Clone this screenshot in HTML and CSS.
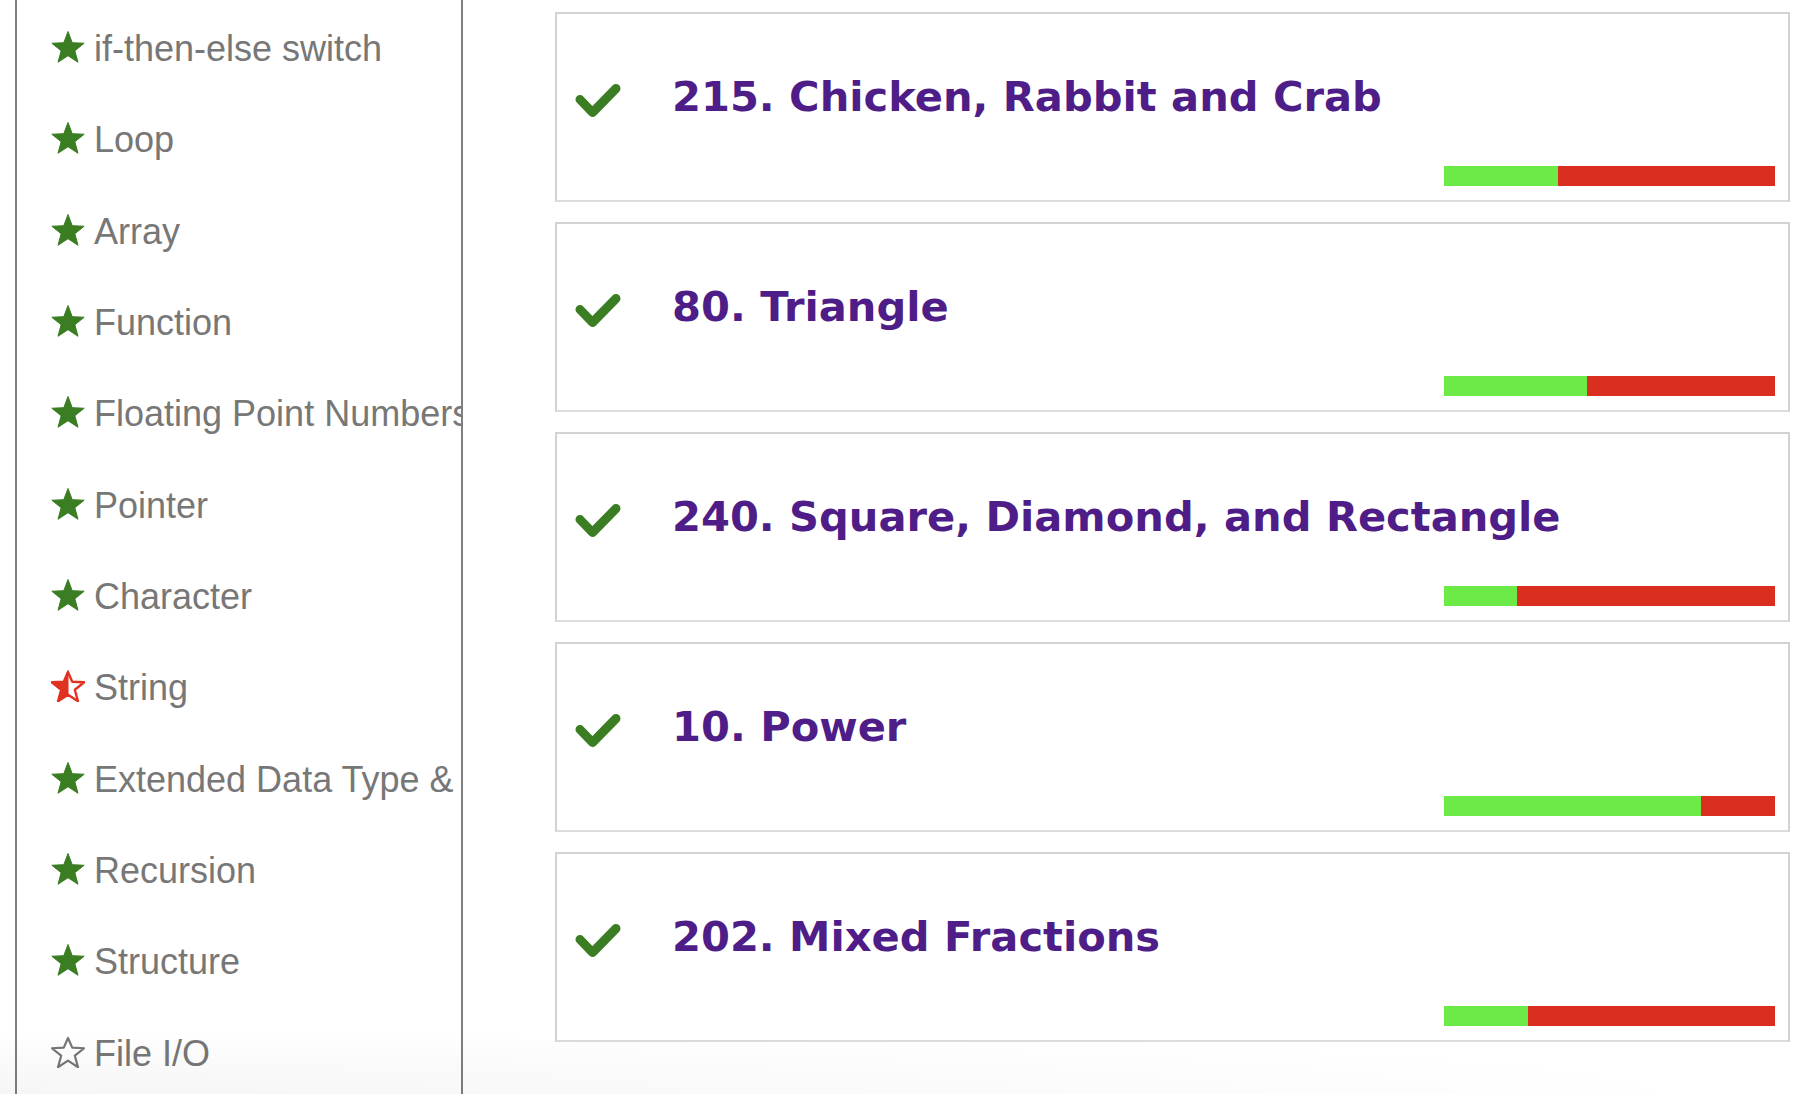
FILE: index.html
```html
<!DOCTYPE html>
<html lang="en">
<head>
<meta charset="utf-8">
<title>Problems</title>
<link rel="stylesheet" href="styles.css">
</head>
<body>
<div class="page">
  <aside class="sidebar">
    <ul class="topics">
      <li class="topic"><svg class="star" viewBox="0 0 34 32"><polygon class="full" points="17,0.5 21.23,11.68 33.17,12.25 23.85,19.72 26.99,31.25 17,24.7 7.01,31.25 10.15,19.72 0.83,12.25 12.77,11.68"/></svg><span>if-then-else switch</span></li>
      <li class="topic"><svg class="star" viewBox="0 0 34 32"><polygon class="full" points="17,0.5 21.23,11.68 33.17,12.25 23.85,19.72 26.99,31.25 17,24.7 7.01,31.25 10.15,19.72 0.83,12.25 12.77,11.68"/></svg><span>Loop</span></li>
      <li class="topic"><svg class="star" viewBox="0 0 34 32"><polygon class="full" points="17,0.5 21.23,11.68 33.17,12.25 23.85,19.72 26.99,31.25 17,24.7 7.01,31.25 10.15,19.72 0.83,12.25 12.77,11.68"/></svg><span>Array</span></li>
      <li class="topic"><svg class="star" viewBox="0 0 34 32"><polygon class="full" points="17,0.5 21.23,11.68 33.17,12.25 23.85,19.72 26.99,31.25 17,24.7 7.01,31.25 10.15,19.72 0.83,12.25 12.77,11.68"/></svg><span>Function</span></li>
      <li class="topic"><svg class="star" viewBox="0 0 34 32"><polygon class="full" points="17,0.5 21.23,11.68 33.17,12.25 23.85,19.72 26.99,31.25 17,24.7 7.01,31.25 10.15,19.72 0.83,12.25 12.77,11.68"/></svg><span>Floating Point Numbers</span></li>
      <li class="topic"><svg class="star" viewBox="0 0 34 32"><polygon class="full" points="17,0.5 21.23,11.68 33.17,12.25 23.85,19.72 26.99,31.25 17,24.7 7.01,31.25 10.15,19.72 0.83,12.25 12.77,11.68"/></svg><span>Pointer</span></li>
      <li class="topic"><svg class="star" viewBox="0 0 34 32"><polygon class="full" points="17,0.5 21.23,11.68 33.17,12.25 23.85,19.72 26.99,31.25 17,24.7 7.01,31.25 10.15,19.72 0.83,12.25 12.77,11.68"/></svg><span>Character</span></li>
      <li class="topic"><svg class="star" viewBox="0 0 34 32"><polygon class="half-outline" points="17,2 21.23,11.68 33.17,12.25 23.85,19.72 26.99,31.25 17,24.7 7.01,31.25 10.15,19.72 0.83,12.25 12.77,11.68"/><polygon class="half-fill" points="17,0.5 17,24.7 7.01,31.25 10.15,19.72 0.83,12.25 12.77,11.68"/></svg><span>String</span></li>
      <li class="topic"><svg class="star" viewBox="0 0 34 32"><polygon class="full" points="17,0.5 21.23,11.68 33.17,12.25 23.85,19.72 26.99,31.25 17,24.7 7.01,31.25 10.15,19.72 0.83,12.25 12.77,11.68"/></svg><span>Extended Data Type &amp; Bit Operations</span></li>
      <li class="topic"><svg class="star" viewBox="0 0 34 32"><polygon class="full" points="17,0.5 21.23,11.68 33.17,12.25 23.85,19.72 26.99,31.25 17,24.7 7.01,31.25 10.15,19.72 0.83,12.25 12.77,11.68"/></svg><span>Recursion</span></li>
      <li class="topic"><svg class="star" viewBox="0 0 34 32"><polygon class="full" points="17,0.5 21.23,11.68 33.17,12.25 23.85,19.72 26.99,31.25 17,24.7 7.01,31.25 10.15,19.72 0.83,12.25 12.77,11.68"/></svg><span>Structure</span></li>
      <li class="topic"><svg class="star" viewBox="0 0 34 32"><polygon class="empty" points="17,2 21.23,11.68 33.17,12.25 23.85,19.72 26.99,31.25 17,24.7 7.01,31.25 10.15,19.72 0.83,12.25 12.77,11.68"/></svg><span>File I/O</span></li>
    </ul>
  </aside>
  <main class="problems">
    <div class="card">
      <div class="card-head"><svg class="check" viewBox="0 0 46 36"><polyline points="5,16.5 17.5,29.5 41,5.5"/></svg><span class="title">215. Chicken, Rabbit and Crab</span></div>
      <div class="bar"><div class="ok" style="width:114px"></div><div class="ng"></div></div>
    </div>
    <div class="card">
      <div class="card-head"><svg class="check" viewBox="0 0 46 36"><polyline points="5,16.5 17.5,29.5 41,5.5"/></svg><span class="title">80. Triangle</span></div>
      <div class="bar"><div class="ok" style="width:143px"></div><div class="ng"></div></div>
    </div>
    <div class="card">
      <div class="card-head"><svg class="check" viewBox="0 0 46 36"><polyline points="5,16.5 17.5,29.5 41,5.5"/></svg><span class="title">240. Square, Diamond, and Rectangle</span></div>
      <div class="bar"><div class="ok" style="width:73px"></div><div class="ng"></div></div>
    </div>
    <div class="card">
      <div class="card-head"><svg class="check" viewBox="0 0 46 36"><polyline points="5,16.5 17.5,29.5 41,5.5"/></svg><span class="title">10. Power</span></div>
      <div class="bar"><div class="ok" style="width:257px"></div><div class="ng"></div></div>
    </div>
    <div class="card">
      <div class="card-head"><svg class="check" viewBox="0 0 46 36"><polyline points="5,16.5 17.5,29.5 41,5.5"/></svg><span class="title">202. Mixed Fractions</span></div>
      <div class="bar"><div class="ok" style="width:84px"></div><div class="ng"></div></div>
    </div>
  </main>
</div>
<div class="bottom-fade"></div>
</body>
</html>
```

FILE: styles.css
```css
html, body {
  margin: 0;
  padding: 0;
  background: #ffffff;
  height: 100%;
  overflow: hidden;
}

.page {
  display: flex;
  align-items: stretch;
  height: 1094px;
}

.sidebar {
  box-sizing: border-box;
  width: 448px;
  margin-left: 15px;
  border-left: 2px solid #7f7f7f;
  border-right: 2px solid #7f7f7f;
  overflow: hidden;
  flex-shrink: 0;
}

.topics {
  list-style: none;
  margin: 0;
  padding: 3px 0 0 0;
}

.topic {
  display: flex;
  align-items: center;
  height: 91.33px;
  white-space: nowrap;
  font-family: "Liberation Sans", Arial, sans-serif;
  font-size: 36px;
  line-height: 41px;
  color: #777777;
}

.star {
  width: 34px;
  height: 32px;
  margin-left: 34px;
  margin-right: 9px;
  margin-top: -3px;
  flex-shrink: 0;
}

.star .full {
  fill: #3a7d22;
  stroke: #3a7d22;
  stroke-width: 1;
  stroke-linejoin: round;
}

.star .half-outline {
  fill: none;
  stroke: #e03223;
  stroke-width: 2.4;
  stroke-linejoin: round;
}

.star .half-fill {
  fill: #e03223;
  stroke: #e03223;
  stroke-width: 1;
  stroke-linejoin: round;
}

.star .empty {
  fill: none;
  stroke: #777777;
  stroke-width: 2.2;
  stroke-linejoin: round;
}

.problems {
  display: flex;
  flex-direction: column;
  gap: 20px;
  margin-left: 92px;
  padding-top: 12px;
  width: 1235px;
  flex-shrink: 0;
}

.card {
  box-sizing: border-box;
  height: 190px;
  border: 2px solid #d2d2d2;
  border-bottom-color: #dcdcdc;
  display: flex;
  flex-direction: column;
  justify-content: space-between;
  padding: 0 13px 14px 18px;
}

.card-head {
  display: flex;
  align-items: center;
  padding-top: 58px;
}

.check {
  width: 46px;
  height: 36px;
  margin-top: 7px;
  flex-shrink: 0;
}

.check polyline {
  fill: none;
  stroke: #3a7d22;
  stroke-width: 9;
  stroke-linecap: round;
  stroke-linejoin: round;
}

.title {
  margin-left: 51px;
  font-family: "DejaVu Sans", Verdana, sans-serif;
  font-weight: bold;
  font-size: 41.6px;
  line-height: 50px;
  color: #4e1d87;
  white-space: nowrap;
}

.bar {
  align-self: flex-end;
  display: flex;
  width: 331px;
  height: 20px;
}

.bar .ok {
  background: #6ceb48;
  height: 100%;
}

.bar .ng {
  flex: 1;
  background: #da2f20;
  height: 100%;
}

.bottom-fade {
  position: fixed;
  left: 0;
  right: 0;
  bottom: 0;
  height: 55px;
  pointer-events: none;
  background: radial-gradient(ellipse 1750px 70px at 0 100%, rgba(0, 0, 0, 0.035), rgba(0, 0, 0, 0) 100%);
}
```
